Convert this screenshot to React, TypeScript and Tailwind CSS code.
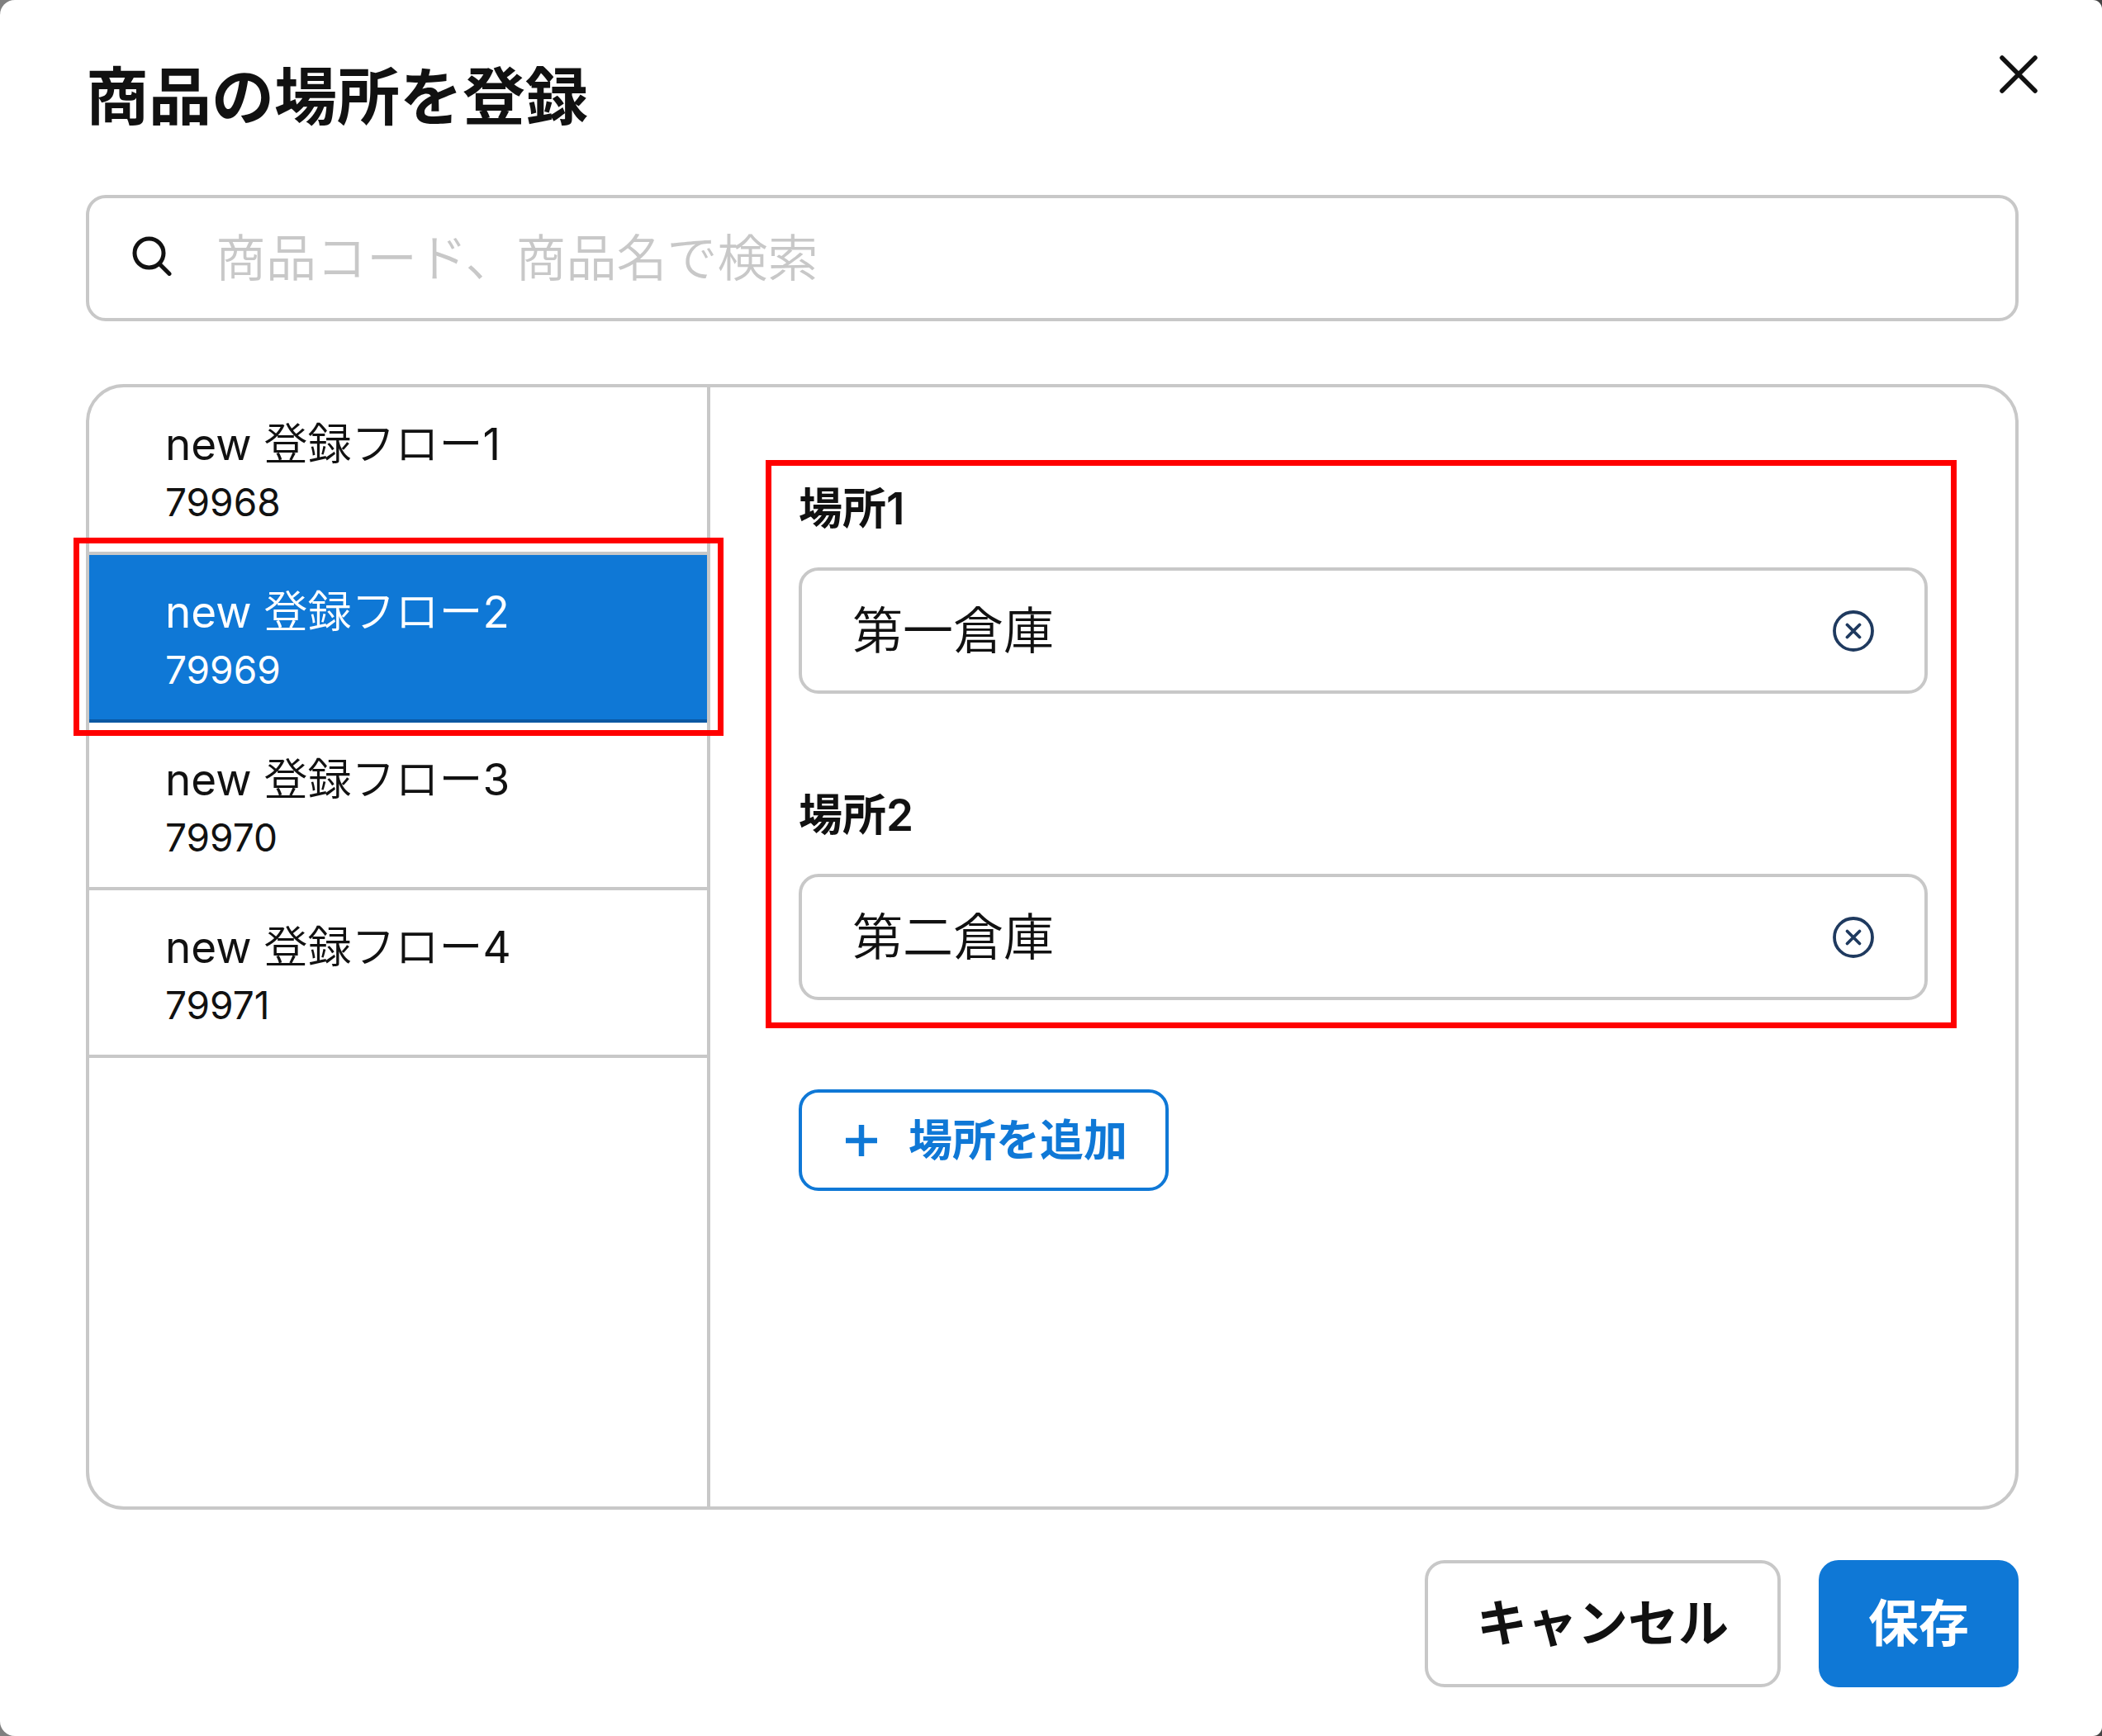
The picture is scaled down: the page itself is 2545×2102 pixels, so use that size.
import { useState } from "react";

const products = [
  { name: "new 登録フロー1", code: "79968" },
  { name: "new 登録フロー2", code: "79969" },
  { name: "new 登録フロー3", code: "79970" },
  { name: "new 登録フロー4", code: "79971" },
];

function CloseIcon() {
  return (
    <svg viewBox="0 0 46 46" className="size-[46px]" fill="none" stroke="currentColor" strokeWidth="5.5" strokeLinecap="round" aria-hidden="true">
      <path d="M3 3L43 43M43 3L3 43" />
    </svg>
  );
}

function SearchIcon() {
  return (
    <svg viewBox="0 0 48 48" className="size-12 shrink-0 mb-1.5" fill="none" stroke="currentColor" strokeWidth="5" strokeLinecap="round" aria-hidden="true">
      <circle cx="20.5" cy="20.5" r="17.5" />
      <path d="M33.5 34L45 45.5" />
    </svg>
  );
}

function ClearIcon() {
  return (
    <svg viewBox="0 0 50 50" className="size-[50px]" fill="none" stroke="currentColor" strokeWidth="3.8" strokeLinecap="round" aria-hidden="true">
      <circle cx="25" cy="25" r="23" />
      <path d="M17.5 17.5L32.5 32.5M32.5 17.5L17.5 32.5" />
    </svg>
  );
}

function PlusIcon() {
  return (
    <svg viewBox="0 0 38 38" className="size-[38px]" stroke="currentColor" strokeWidth="6.5" aria-hidden="true">
      <path d="M0 19H38M19 0V38" />
    </svg>
  );
}

export default function App() {
  const [selected, setSelected] = useState(1);
  const [places, setPlaces] = useState(["第一倉庫", "第二倉庫"]);

  const update = (index: number, value: string) =>
    setPlaces(places.map((place, i) => (i === index ? value : place)));

  return (
    <div className="min-h-screen flex bg-linear-to-r from-[#808080] to-[#444444] font-['Inter','Noto_Sans_CJK_JP',sans-serif] text-[#111111]">
      <main className="flex-1 flex flex-col bg-white rounded-l-[18px] rounded-r-[11px] pl-[104px] pr-[101px] pt-[67px] pb-[59px]">
        <header className="flex items-start justify-between h-[169px] -mr-[23px]">
          <h1 className="text-[76px] leading-[100px] font-bold">商品の場所を登録</h1>
          <button type="button" aria-label="閉じる">
            <CloseIcon />
          </button>
        </header>

        <label className="flex items-center gap-[53px] h-[153px] px-[52px] border-4 border-[#c8c8c8] rounded-3xl">
          <SearchIcon />
          <input
            type="search"
            aria-label="商品を検索"
            placeholder="商品コード、商品名で検索"
            className="flex-1 min-w-0 text-[61px] leading-[92px] font-[350] outline-none placeholder:text-[#c8c8c8]"
          />
        </label>

        <div className="flex-1 flex mt-[76px] border-4 border-[#c8c8c8] rounded-[46px]">
          <ul className="w-[752px] shrink-0 border-r-4 border-[#c8c8c8]">
            {products.map((product, i) => (
              <li key={product.code} className="relative">
                <button
                  type="button"
                  aria-pressed={i === selected}
                  onClick={() => setSelected(i)}
                  className={
                    i === selected
                      ? "flex flex-col justify-start w-full h-[203px] pl-[92px] pt-7 text-left border-b-4 bg-[#0f78d6] border-[#0b58a3] text-white"
                      : "flex flex-col justify-start w-full h-[203px] pl-[92px] pt-7 text-left border-b-4 border-[#c8c8c8]"
                  }
                >
                  <span className="h-[70px] text-[53px] leading-[82px] font-['Inter','Noto_Sans_CJK_JP_DemiLight','Noto_Sans_CJK_JP',sans-serif]">
                    {product.name}
                  </span>
                  <span className="text-[46px] leading-[82px]">{product.code}</span>
                </button>
                {i === selected && (
                  <div className="absolute z-10 pointer-events-none -left-[19px] -right-5 -top-[21px] -bottom-4 border-[7px] border-[#ff0000]" />
                )}
              </li>
            ))}
          </ul>

          <section className="flex-1 min-w-0 pl-[107px] pr-[106px] pt-[106px]">
            <div className="relative flex flex-col gap-[106px]">
              {places.map((place, i) => (
                <div key={i}>
                  <label htmlFor={`place-${i}`} className="block h-[112px] text-[53px] leading-[82px] font-semibold">
                    場所{i + 1}
                  </label>
                  <div className="flex items-center h-[153px] px-[61px] border-4 border-[#c8c8c8] rounded-3xl">
                    <input
                      id={`place-${i}`}
                      type="text"
                      value={place}
                      onChange={(e) => update(i, e.target.value)}
                      className="flex-1 min-w-0 text-[61px] leading-[92px] font-[350] outline-none"
                    />
                    <button type="button" aria-label="クリア" onClick={() => update(i, "")} className="text-[#1f3a5f]">
                      <ClearIcon />
                    </button>
                  </div>
                </div>
              ))}
              <div className="absolute pointer-events-none -left-10 -right-[35px] -top-[18px] -bottom-[34px] border-[7px] border-[#ff0000]" />
            </div>

            <button
              type="button"
              onClick={() => setPlaces([...places, ""])}
              className="flex items-center gap-[38px] h-[123px] mt-[108px] pl-[53px] pr-[46px] border-4 border-[#0f78d6] rounded-3xl text-[53px] leading-[80px] font-semibold text-[#0f78d6]"
            >
              <PlusIcon />
              場所を追加
            </button>
          </section>
        </div>

        <footer className="flex justify-end gap-[46px] mt-[61px] text-[61px] leading-[92px] font-semibold">
          <button type="button" className="h-[154px] px-[59px] border-4 border-[#c8c8c8] rounded-3xl">
            キャンセル
          </button>
          <button type="button" className="h-[154px] px-[60px] rounded-3xl bg-[#0f78d6] text-white">
            保存
          </button>
        </footer>
      </main>
    </div>
  );
}
